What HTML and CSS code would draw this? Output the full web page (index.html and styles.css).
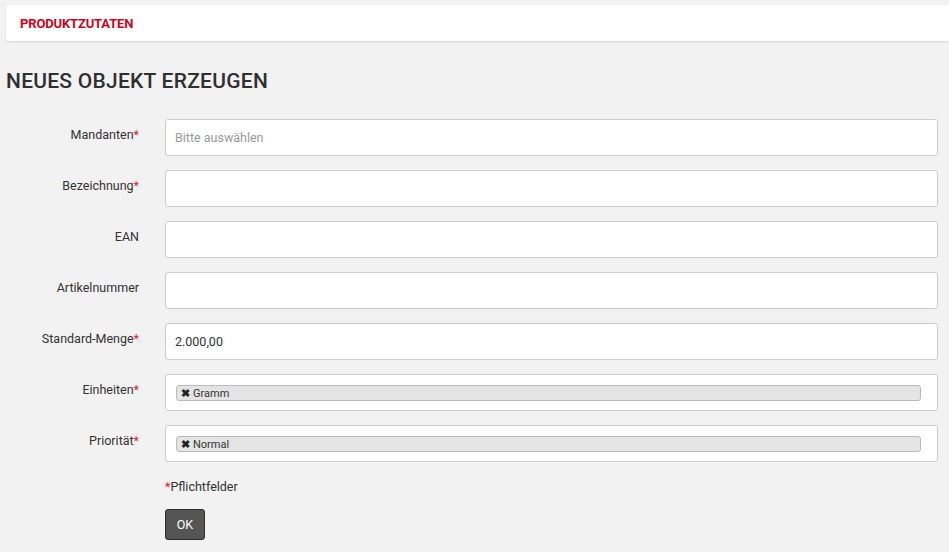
FILE: index.html
```html
<!DOCTYPE html>
<html lang="de">
  <head>
    <meta charset="UTF-8" />
    <title>Produktzutaten</title>
    <link rel="stylesheet" href="styles.css">
  </head>
  <body>
    <header class="topbar">
      <span class="topbar-title">PRODUKTZUTATEN</span>
    </header>
    <h1 class="page-title">NEUES OBJEKT ERZEUGEN</h1>
    <form class="form">
      <div class="row">
        <label class="label">Mandanten<span class="req">*</span></label>
        <div class="field"><input class="input" placeholder="Bitte auswählen"></div>
      </div>
      <div class="row">
        <label class="label">Bezeichnung<span class="req">*</span></label>
        <div class="field"><input class="input"></div>
      </div>
      <div class="row">
        <label class="label">EAN</label>
        <div class="field"><input class="input"></div>
      </div>
      <div class="row">
        <label class="label">Artikelnummer</label>
        <div class="field"><input class="input"></div>
      </div>
      <div class="row">
        <label class="label">Standard-Menge<span class="req">*</span></label>
        <div class="field"><input class="input" value="2.000,00"></div>
      </div>
      <div class="row">
        <label class="label">Einheiten<span class="req">*</span></label>
        <div class="field">
          <div class="select">
            <span class="tag"><span class="tag-x">&#10006;</span>Gramm</span>
          </div>
        </div>
      </div>
      <div class="row">
        <label class="label">Priorität<span class="req">*</span></label>
        <div class="field">
          <div class="select">
            <span class="tag"><span class="tag-x">&#10006;</span>Normal</span>
          </div>
        </div>
      </div>
      <div class="row note-row">
        <div class="label"></div>
        <div class="field note"><span class="req">*</span>Pflichtfelder</div>
      </div>
      <div class="row">
        <div class="label"></div>
        <div class="field"><button type="button" class="btn">OK</button></div>
      </div>
    </form>
  </body>
</html>
```

FILE: styles.css
```css
body {
  margin: 0;
  padding: 5px 0 0 6px;
  background-color: #f2f2f2;
  font-family: Roboto, "Liberation Sans", sans-serif;
  color: #333;
  font-size: 12.5px;
  overflow: hidden;
}
.topbar {
  background-color: white;
  height: 36px;
  display: flex;
  align-items: center;
  padding-left: 14px;
  border-radius: 3px 0 0 3px;
  box-shadow: 0 1px 2px rgba(0, 0, 0, 0.12);
}
.topbar-title {
  color: #d0021b;
  font-weight: bold;
  font-size: 13px;
  letter-spacing: -0.15px;
  padding-top: 1px;
}
.page-title {
  font-size: 21px;
  font-weight: 500;
  letter-spacing: 0.25px;
  margin: 28px 0 26px 0;
  color: #2f2f2f;
}
.form {
  display: flex;
  flex-direction: column;
  gap: 14px;
}
.row {
  display: flex;
}
.label {
  width: 133px;
  flex: none;
  text-align: right;
  padding-top: 8px;
  margin-right: 26px;
  color: #333;
}
.req {
  color: #e8212f;
}
.field {
  width: 773px;
}
.input,
.select {
  box-sizing: border-box;
  width: 100%;
  height: 37px;
  border: 1px solid #ccc;
  border-radius: 3px;
  background-color: white;
  font-family: Roboto, "Liberation Sans", sans-serif;
  font-size: 12.5px;
  color: #333;
  padding: 0 9px;
  outline: none;
}
.input::placeholder {
  color: #999;
}
.select {
  padding: 10px 16px 0 10px;
}
.tag {
  display: flex;
  align-items: center;
  box-sizing: border-box;
  height: 16px;
  background-color: #e4e4e4;
  border: 1px solid #bbb;
  border-radius: 3px;
  font-size: 11px;
  color: #333;
  padding-left: 4px;
}
.tag-x {
  font-size: 11px;
  font-weight: bold;
  margin-right: 3px;
  color: #222;
}
.note-row {
  margin-top: 3px;
}
.note {
  font-size: 12.5px;
}
.btn {
  width: 40px;
  height: 31px;
  background-color: #555;
  border: 1px solid #2e2e2e;
  border-radius: 3px;
  color: white;
  font-family: Roboto, "Liberation Sans", sans-serif;
  font-size: 12.5px;
  margin-top: 1px;
}
```
